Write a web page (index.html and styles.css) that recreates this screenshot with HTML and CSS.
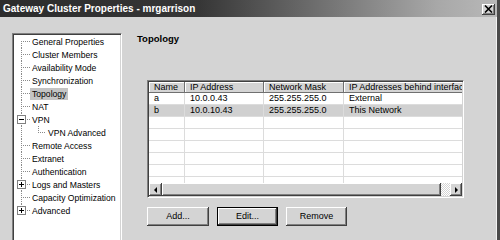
FILE: index.html
```html
<!DOCTYPE html>
<html>
<head>
<meta charset="utf-8">
<link rel="stylesheet" href="styles.css">
</head>
<body>
<div class="window">
  <div class="titlebar">
    <span class="title">Gateway Cluster Properties - mrgarrison</span>
    <span class="close"><svg width="9" height="8" viewBox="0 0 9 8"><path d="M1 0.5 L8 7.5 M8 0.5 L1 7.5" stroke="#000" stroke-width="1.6"/></svg></span>
  </div>
  <div class="main">
    <div class="tree">
      <div class="node first"><span class="conn"></span><span class="label">General Properties</span></div>
      <div class="node"><span class="conn"></span><span class="label">Cluster Members</span></div>
      <div class="node"><span class="conn"></span><span class="label">Availability Mode</span></div>
      <div class="node"><span class="conn"></span><span class="label">Synchronization</span></div>
      <div class="node"><span class="conn"></span><span class="label selected">Topology</span></div>
      <div class="node"><span class="conn"></span><span class="label">NAT</span></div>
      <div class="node"><span class="conn"><span class="box minus"></span></span><span class="label">VPN</span></div>
      <div class="node child"><span class="conn vonly"></span><span class="conn2"></span><span class="label">VPN Advanced</span></div>
      <div class="node"><span class="conn"></span><span class="label">Remote Access</span></div>
      <div class="node"><span class="conn"></span><span class="label">Extranet</span></div>
      <div class="node"><span class="conn"></span><span class="label">Authentication</span></div>
      <div class="node"><span class="conn"><span class="box plus"></span></span><span class="label">Logs and Masters</span></div>
      <div class="node"><span class="conn"></span><span class="label">Capacity Optimization</span></div>
      <div class="node last"><span class="conn"><span class="box plus"></span></span><span class="label">Advanced</span></div>
    </div>
    <div class="content">
      <div class="heading">Topology</div>
      <div class="listview">
        <div class="lv-body">
          <div class="lv-row lv-head">
            <div class="cell c1">Name</div>
            <div class="cell c2">IP Address</div>
            <div class="cell c3">Network Mask</div>
            <div class="cell c4">IP Addresses behind interface</div>
          </div>
          <div class="lv-row">
            <div class="cell c1">a</div>
            <div class="cell c2">10.0.0.43</div>
            <div class="cell c3">255.255.255.0</div>
            <div class="cell c4">External</div>
          </div>
          <div class="lv-row sel">
            <div class="cell c1">b</div>
            <div class="cell c2">10.0.10.43</div>
            <div class="cell c3">255.255.255.0</div>
            <div class="cell c4">This Network</div>
          </div>
          <div class="lv-row"><div class="cell c1"></div><div class="cell c2"></div><div class="cell c3"></div><div class="cell c4"></div></div>
          <div class="lv-row"><div class="cell c1"></div><div class="cell c2"></div><div class="cell c3"></div><div class="cell c4"></div></div>
          <div class="lv-row"><div class="cell c1"></div><div class="cell c2"></div><div class="cell c3"></div><div class="cell c4"></div></div>
          <div class="lv-row"><div class="cell c1"></div><div class="cell c2"></div><div class="cell c3"></div><div class="cell c4"></div></div>
          <div class="lv-row"><div class="cell c1"></div><div class="cell c2"></div><div class="cell c3"></div><div class="cell c4"></div></div>
          <div class="lv-row"><div class="cell c1"></div><div class="cell c2"></div><div class="cell c3"></div><div class="cell c4"></div></div>
        </div>
        <div class="hscroll">
          <div class="sb-btn"><span class="arrow-left"></span></div>
          <div class="sb-thumb"></div>
          <div class="sb-track"></div>
          <div class="sb-btn right"><span class="arrow-right"></span></div>
        </div>
      </div>
      <div class="buttons">
        <div class="btn add">Add...</div>
        <div class="btn edit">Edit...</div>
        <div class="btn remove">Remove</div>
      </div>
    </div>
  </div>
</div>
</body>
</html>
```
FILE: styles.css
```css
html, body {
  margin: 0;
  padding: 0;
  background: #d4d4d4;
}
body {
  font-family: "Liberation Sans", Arial, sans-serif;
  color: #000;
}
.window {
  width: 500px;
  height: 240px;
  box-sizing: border-box;
  padding-right: 3px;
  background: #d4d4d4;
  box-shadow: inset -3px 0 #4a4a4a, inset -4px 0 #f2f2f2;
  overflow: hidden;
}
.titlebar {
  height: 17px;
  display: flex;
  align-items: center;
  justify-content: space-between;
  background: linear-gradient(to right, #2c2c2c 0%, #363636 40%, #a8a8a8 88%, #b8b8b8 100%);
  padding: 0 2px 0 3px;
}
.title {
  color: #fff;
  font-weight: bold;
  font-size: 10px;
  line-height: 17px;
  white-space: nowrap;
}
.close {
  width: 13px;
  height: 11px;
  box-sizing: border-box;
  background: #d4d4d4;
  box-shadow: inset -1px -1px #404040, inset 1px 1px #fff, inset -2px -2px #808080;
  display: flex;
  align-items: center;
  justify-content: center;
  margin-top: 1px;
}
.close svg { display: block; }
.main {
  display: flex;
  align-items: flex-start;
  padding: 16px 0 0 12px;
}
.tree {
  width: 110px;
  height: 215px;
  flex: none;
  box-sizing: border-box;
  background: #fff;
  border: 1px solid;
  border-color: #808080 #fff #fff #808080;
  box-shadow: inset 1px 1px #404040, inset -1px -1px #d4d4d4;
  padding: 1px 0 0 1px;
}
.node {
  display: flex;
  align-items: center;
  height: 13px;
  font-size: 8.6px;
  white-space: nowrap;
}
.conn {
  width: 16px;
  height: 13px;
  flex: none;
  display: flex;
  align-items: center;
  background-image:
    repeating-linear-gradient(to bottom, #8a8a8a 0 1px, transparent 1px 2px),
    repeating-linear-gradient(to right, #8a8a8a 0 1px, transparent 1px 2px);
  background-repeat: no-repeat;
  background-position: 7px 0, 7px 6px;
  background-size: 1px 13px, 9px 1px;
}
.first .conn {
  background-position: 7px 6px, 7px 6px;
  background-size: 1px 7px, 9px 1px;
}
.last .conn {
  background-position: 7px 0, 7px 6px;
  background-size: 1px 7px, 9px 1px;
}
.conn.vonly {
  background-image: repeating-linear-gradient(to bottom, #8a8a8a 0 1px, transparent 1px 2px);
  background-position: 7px 0;
  background-size: 1px 13px;
}
.conn2 {
  width: 16px;
  height: 13px;
  flex: none;
  background-image:
    repeating-linear-gradient(to bottom, #8a8a8a 0 1px, transparent 1px 2px),
    repeating-linear-gradient(to right, #8a8a8a 0 1px, transparent 1px 2px);
  background-repeat: no-repeat;
  background-position: 8px 0, 8px 6px;
  background-size: 1px 7px, 8px 1px;
}
.box {
  width: 9px;
  height: 9px;
  box-sizing: border-box;
  margin-left: 3px;
  border: 1px solid #808080;
  background-color: #fff;
  background-repeat: no-repeat;
}
.minus {
  background-image: linear-gradient(#000, #000);
  background-position: center;
  background-size: 5px 1px;
}
.plus {
  background-image: linear-gradient(#000, #000), linear-gradient(#000, #000);
  background-position: center, center;
  background-size: 5px 1px, 1px 5px;
}
.label {
  padding: 0 2px;
  line-height: 12px;
}
.label.selected {
  background: #c4c4c4;
}
.content {
  margin-left: 15px;
}
.heading {
  font-weight: bold;
  font-size: 9.5px;
  line-height: 12px;
}
.listview {
  margin: 35px 0 0 10px;
  width: 317px;
  height: 118px;
  box-sizing: border-box;
  border: 1px solid;
  border-color: #808080 #fff #fff #808080;
  box-shadow: inset 1px 1px #404040, inset -1px -1px #d4d4d4;
  padding: 1px;
  background: #fff;
  display: flex;
  flex-direction: column;
}
.lv-body {
  height: 101px;
  overflow: hidden;
  background: #fff;
}
.lv-row {
  display: flex;
  height: 12px;
  font-size: 9px;
}
.cell {
  flex: none;
  box-sizing: border-box;
  height: 12px;
  border-right: 1px solid #dcdcdc;
  border-bottom: 1px solid #dcdcdc;
  padding-left: 5px;
  line-height: 11px;
  white-space: nowrap;
  overflow: hidden;
}
.c1 { width: 36px; }
.c2 { width: 79px; }
.c3 { width: 80px; }
.c4 { width: 140px; }
.lv-head {
  height: 11px;
}
.lv-head .cell {
  height: 11px;
  line-height: 10px;
  background: #d4d4d4;
  border-right: 1px solid #707070;
  border-bottom: 1px solid #707070;
  box-shadow: inset 1px 1px #fff;
}
.lv-row.sel .cell {
  background: #d0d0d0;
}
.hscroll {
  display: flex;
  height: 13px;
  flex: none;
}
.sb-btn {
  width: 13px;
  height: 13px;
  box-sizing: border-box;
  background: #d4d4d4;
  box-shadow: inset -1px -1px #404040, inset 1px 1px #fff, inset -2px -2px #808080;
  display: flex;
  align-items: center;
  justify-content: center;
  flex: none;
}
.sb-btn.right { width: 12px; }
.arrow-left {
  width: 0;
  height: 0;
  border-top: 3px solid transparent;
  border-bottom: 3px solid transparent;
  border-right: 3px solid #000;
  margin-right: 1px;
}
.arrow-right {
  width: 0;
  height: 0;
  border-top: 3px solid transparent;
  border-bottom: 3px solid transparent;
  border-left: 3px solid #000;
  margin-left: 1px;
}
.sb-thumb {
  width: 279px;
  flex: none;
  height: 13px;
  box-sizing: border-box;
  background: #d4d4d4;
  box-shadow: inset -1px -1px #404040, inset 1px 1px #fff, inset -2px -2px #808080;
}
.sb-track {
  flex: 1;
  background: repeating-conic-gradient(#fff 0 25%, #d4d4d4 0 50%) 0 0 / 2px 2px;
}
.buttons {
  display: flex;
  gap: 8px;
  margin: 9px 0 0 10px;
}
.btn {
  height: 19px;
  box-sizing: border-box;
  background: #d4d4d4;
  box-shadow: inset -1px -1px #404040, inset 1px 1px #fff, inset -2px -2px #808080;
  font-size: 9px;
  line-height: 19px;
  text-align: center;
}
.btn.add { width: 62px; }
.btn.edit {
  width: 61px;
  border: 1px solid #000;
  line-height: 17px;
}
.btn.remove { width: 61px; }
```
